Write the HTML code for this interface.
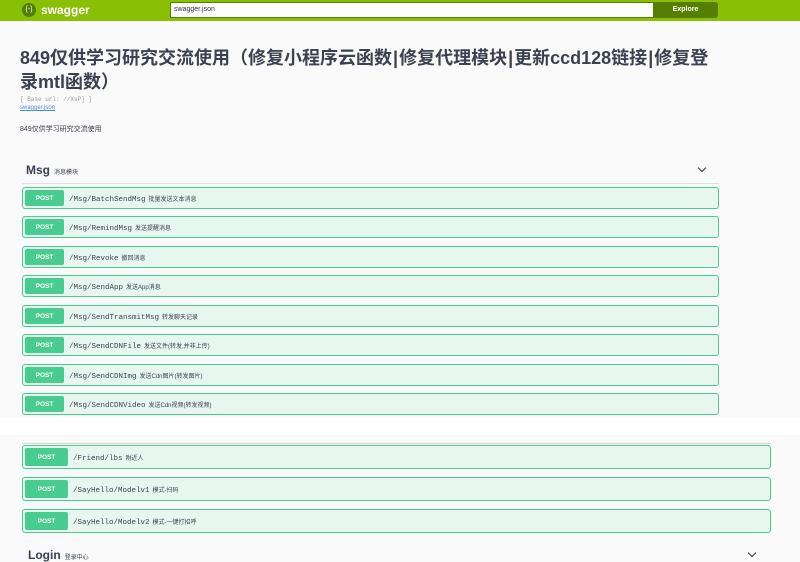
<!DOCTYPE html>
<html><head><meta charset="utf-8"><style>
*{margin:0;padding:0;box-sizing:border-box}
body{width:800px;height:561px;overflow:hidden;background:#fafafa;font-family:"Liberation Sans","Noto Sans CJK SC",sans-serif;color:#3b4151;position:relative}
.top{position:absolute;left:0;top:0;width:800px;height:21px;background:#89bf04}
.logo{position:absolute;left:22px;top:3px;width:14px;height:14px;border-radius:50%;background:#547f00;color:#fff;font-size:7px;text-align:center;line-height:14px}
.brand{position:absolute;left:41px;top:3px;color:#fff;font-weight:bold;font-size:12px}
.inp{position:absolute;left:170px;top:2px;width:484px;height:16px;background:#fff;border:1px solid #547f00;font-size:7px;padding:3px 3px;color:#333}
.btn{position:absolute;left:653px;top:2px;width:65px;height:16px;background:#547f00;color:#fff;font-size:7px;font-weight:bold;text-align:center;line-height:16px;border-radius:0 3px 3px 0}
h1{position:absolute;left:20px;top:46px;width:760px;white-space:nowrap;font-size:18px;line-height:24px;font-weight:bold;color:#3b4151}
h1 u{text-decoration:none;margin:0 1px}
.small{position:absolute;font-size:6px;color:#999}
.sec{position:absolute;font-weight:bold;font-size:12px;color:#3b4151}
.sec span{font-size:6px;font-weight:normal;margin-left:4px}
.row{position:absolute;height:22px;background:#e8f6f0;border:1px solid #49cc90;border-radius:3px;font-size:7px}
.row b{position:absolute;left:2px;top:2px;width:39px;height:16px;background:#49cc90;color:#fff;font-size:6.5px;display:flex;align-items:center;justify-content:center;border-radius:2px}
.row i{position:absolute;left:46px;top:6px;font-style:normal;font-family:"Liberation Mono","Noto Sans CJK SC",monospace;font-size:7.5px;color:#3b4151}
.row i small{font-family:"Liberation Sans","Noto Sans CJK SC",sans-serif;font-size:6px;margin-left:3px}
.chev{position:absolute;width:6px;height:6px;border-right:1px solid #333;border-bottom:1px solid #333;transform:rotate(45deg)}
</style></head><body>
<div class="top"><div class="logo">{-}</div><div class="brand">swagger</div><div class="inp">swagger.json</div><div class="btn">Explore</div></div>
<h1>849仅供学习研究交流使用（修复小程序云函数<u>|</u>修复代理模块<u>|</u>更新ccd128链接<u>|</u>修复登<br>录mtl函数）</h1>
<div class="small" style="left:20px;top:96px;font-family:'Liberation Mono',monospace">[ Base url: //XsP] ]</div>
<div class="small" style="left:20px;top:105px;color:#4990e2;text-decoration:underline">swagger.json</div>
<div class="small" style="left:20px;top:124px;color:#3b4151;font-size:7px">849仅供学习研究交流使用</div>
<div class="sec" style="left:26px;top:163px">Msg<span>消息模块</span></div>
<div class="chev" style="left:699px;top:165px"></div>
<div style="position:absolute;left:22px;top:183px;width:697px;height:1px;background:#e0e0e0"></div>
<div class="row" style="left:22px;top:187px;width:697px"><b>POST</b><i>/Msg/BatchSendMsg<small>批量发送文本消息</small></i></div>
<div class="row" style="left:22px;top:216px;width:697px"><b>POST</b><i>/Msg/RemindMsg<small>发送提醒消息</small></i></div>
<div class="row" style="left:22px;top:246px;width:697px"><b>POST</b><i>/Msg/Revoke<small>撤回消息</small></i></div>
<div class="row" style="left:22px;top:275px;width:697px"><b>POST</b><i>/Msg/SendApp<small>发送App消息</small></i></div>
<div class="row" style="left:22px;top:305px;width:697px"><b>POST</b><i>/Msg/SendTransmitMsg<small>转发聊天记录</small></i></div>
<div class="row" style="left:22px;top:334px;width:697px"><b>POST</b><i>/Msg/SendCDNFile<small>发送文件(转发,并非上传)</small></i></div>
<div class="row" style="left:22px;top:364px;width:697px"><b>POST</b><i>/Msg/SendCDNImg<small>发送Cdn图片(转发图片)</small></i></div>
<div class="row" style="left:22px;top:393px;width:697px"><b>POST</b><i>/Msg/SendCDNVideo<small>发送Cdn视频(转发视频)</small></i></div>
<div style="position:absolute;left:0;top:418px;width:800px;height:17px;background:#fff"></div>
<div style="position:absolute;left:22px;top:443px;width:749px;height:1px;background:#d8d8d8"></div>
<div class="row" style="left:22px;top:445px;width:749px;height:24px"><b style="width:43px;height:18px">POST</b><i style="left:50px;top:7px">/Friend/lbs<small>附近人</small></i></div>
<div class="row" style="left:22px;top:477px;width:749px;height:24px"><b style="width:43px;height:18px">POST</b><i style="left:50px;top:7px">/SayHello/Modelv1<small>模式-扫码</small></i></div>
<div class="row" style="left:22px;top:509px;width:749px;height:24px"><b style="width:43px;height:18px">POST</b><i style="left:50px;top:7px">/SayHello/Modelv2<small>模式-一键打招呼</small></i></div>
<div class="sec" style="left:28px;top:548px">Login<span>登录中心</span></div>
<div class="chev" style="left:749px;top:550px"></div>
</body></html>
